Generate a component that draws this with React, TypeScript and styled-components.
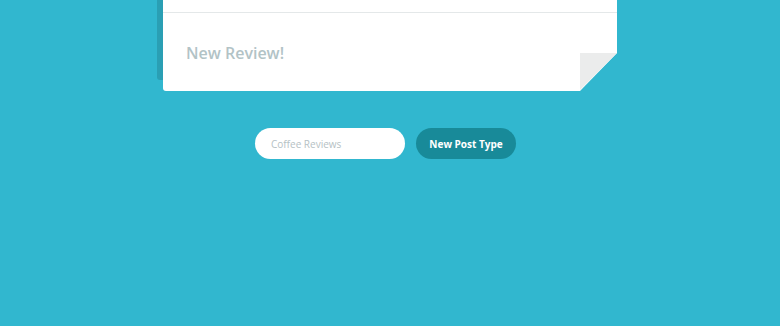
import React from "react";
import styled, { createGlobalStyle } from "styled-components";

const Global = createGlobalStyle`
  html, body { margin: 0; padding: 0; background: #31b7cf; }
  body { font-family: "Open Sans", "Noto Sans", sans-serif; }
`;

const Page = styled.div`
  width: 780px;
  height: 326px;
  display: flex;
  flex-direction: column;
  align-items: center;
  overflow: hidden;
`;

const Card = styled.div`
  position: relative;
  width: 454px;
  height: 91px;
  display: flex;
  flex-direction: column;
  &::before {
    content: "";
    position: absolute;
    left: -6px;
    top: 0;
    width: 6px;
    height: 80px;
    background: #2a9fb4;
    border-bottom-left-radius: 3px;
  }
`;

const Sheet = styled.div`
  position: relative;
  flex: 1;
  display: flex;
  flex-direction: column;
  background: #ffffff;
  border-bottom-left-radius: 3px;
  clip-path: polygon(0 0, 100% 0, 100% 53px, 417px 100%, 0 100%);
`;

const Fold = styled.div`
  position: absolute;
  right: 0;
  top: 53px;
  width: 37px;
  height: 37px;
  background: #ebecec;
  clip-path: polygon(0 0, 100% 0, 0 100%);
`;

const Header = styled.div`
  height: 12px;
  border-bottom: 1px solid #e4e8e9;
`;

const Body = styled.div`
  padding: 30px 23px 0;
`;

const Title = styled.div`
  font-size: 16px;
  font-weight: 600;
  color: #b2c3c6;
  line-height: 20px;
`;

const Row = styled.div`
  display: flex;
  gap: 11px;
  margin-top: 37px;
  margin-right: 9px;
`;

const Input = styled.input`
  box-sizing: border-box;
  width: 150px;
  height: 31px;
  border: none;
  outline: none;
  border-radius: 16px;
  background: #fff;
  padding: 0 16px;
  font-family: "Open Sans", "Noto Sans", sans-serif;
  font-size: 10px;
  color: #7a8a8e;
  &::placeholder { color: #b5c1c4; }
`;

const Button = styled.button`
  box-sizing: border-box;
  width: 100px;
  height: 31px;
  border: none;
  border-radius: 16px;
  background: #188a99;
  color: #ffffff;
  font-family: "Open Sans", "Noto Sans", sans-serif;
  font-size: 10px;
  font-weight: 700;
  padding: 0;
`;

export default function App() {
  return (
    <>
      <Global />
      <Page>
        <Card>
          <Sheet>
            <Header />
            <Body>
              <Title>New Review!</Title>
            </Body>
          </Sheet>
          <Fold />
        </Card>
        <Row>
          <Input placeholder="Coffee Reviews" />
          <Button>New Post Type</Button>
        </Row>
      </Page>
    </>
  );
}
